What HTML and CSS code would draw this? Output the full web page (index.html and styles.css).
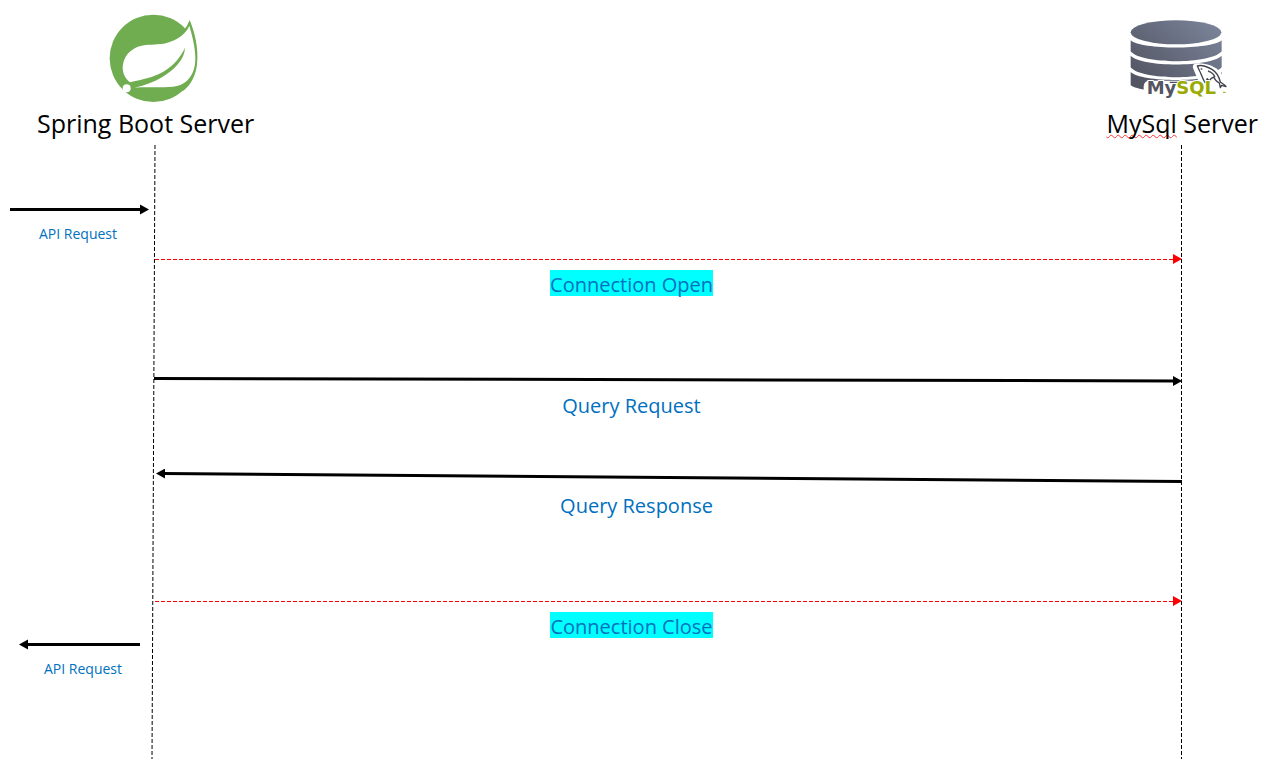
FILE: index.html
```html
<!DOCTYPE html>
<html lang="en">
<head>
<meta charset="utf-8">
<title>Spring Boot and MySql connection sequence</title>
<link rel="stylesheet" href="styles.css">
</head>
<body>
<main class="diagram">
  <svg class="defs" width="0" height="0" aria-hidden="true">
    <defs>
      <marker id="head-black" viewBox="0 0 9 10" refX="9" refY="5" markerWidth="9" markerHeight="10" markerUnits="userSpaceOnUse" orient="auto"><path d="M0 0 9 5 0 10z" fill="#000"/></marker>
      <marker id="head-red" viewBox="0 0 9 10" refX="9" refY="5" markerWidth="9" markerHeight="10" markerUnits="userSpaceOnUse" orient="auto"><path d="M0 0 9 5 0 10z" fill="#f00"/></marker>
    </defs>
  </svg>

  <header class="participants">
    <section class="participant">
      <svg class="logo" viewBox="35 21 312 276" role="img" aria-label="Spring">
        <g fill="#70ad51">
          <circle cx="189" cy="160" r="131"/>
          <path d="M280 76Q291 64 298 45C316 88 323 132 321 166C319 210 302 240 278 258L240 200z"/>
        </g>
        <path fill="#fff" d="M297 62C308 99 316 137 315 165C314 205 293 236 260 243C222 251 174 244 133 248C164 241 192 231 216 216C250 195 283 164 284 128C267 165 238 192 206 207C176 221 145 225 119 232C103 221 94 199 98 178C104 143 134 123 166 120C191 118 214 120 238 111C266 101 288 84 297 62z"/>
        <circle cx="109" cy="250" r="12" fill="#fff"/>
      </svg>
      <h1 class="name">Spring Boot Server</h1>
    </section>
    <section class="participant">
      <svg class="logo" viewBox="25 6 312 276" role="img" aria-label="MySQL">
        <defs>
          <linearGradient id="disk" gradientUnits="userSpaceOnUse" x1="270" y1="40" x2="80" y2="240">
            <stop offset="0" stop-color="#788197"/>
            <stop offset="1" stop-color="#535562"/>
          </linearGradient>
        </defs>
        <g fill="url(#disk)">
          <ellipse cx="169" cy="67" rx="136" ry="36"/>
          <path d="M33 91C65 120 273 120 306 91V124C273 164 65 164 33 124z"/>
          <path d="M33 137C65 172 273 172 306 137V172C273 212 65 212 33 172z"/>
          <path d="M33 186C65 218 273 218 306 186V226C273 252 65 252 33 226z"/>
        </g>
        <path d="M72 264V228Q74 212 90 212H236L220 174Q216 158 240 160Q291 164 308 196L325 235V264z" fill="#fff"/>
        <path d="M233 168C244 164 262 170 278 179C291 187 299 204 302 216C309 222 315 223 319 230L306 226L302 233L299 219C290 215 285 208 282 201C276 204 270 206 270 214L263 206C259 212 258 222 255 216C247 203 244 190 240 183z" fill="#fff" stroke="#3f414c" stroke-width="4" stroke-linejoin="round"/>
        <path d="M243 176l5 2M150 217h31M265 183C274 186 283 193 286 202" fill="none" stroke="#4d4f5b" stroke-width="4"/>
        <text class="logo-text" x="81" y="252"><tspan fill="#535562">My</tspan><tspan fill="#9aab00">SQL</tspan></text>
        <path d="M310 247h8" stroke="#9aab00" stroke-width="3"/>
      </svg>
      <h1 class="name"><span class="misspelt">MySql</span> Server</h1>
    </section>
  </header>

  <section class="sequence">
    <svg class="lifeline lifeline-left" viewBox="0 0 6 615" preserveAspectRatio="none" aria-hidden="true"><path d="M5 1 2 615"/></svg>
    <svg class="lifeline lifeline-right" viewBox="0 0 6 615" preserveAspectRatio="none" aria-hidden="true"><path d="M3.5 1V615"/></svg>

    <div class="external request">
      <svg class="arrow" aria-hidden="true"><line class="stroke" x1="0" y1="6.5" x2="131" y2="6.5"/><path d="M130 1.5 139 6.5 130 11.5z"/></svg>
      <p class="label small">API Request</p>
    </div>

    <div class="message open">
      <svg class="arrow" aria-hidden="true"><line class="dash" x1="0" y1="6" x2="100%" y2="6" marker-end="url(#head-red)"/></svg>
      <p class="label"><mark>Connection Open</mark></p>
    </div>

    <div class="message query">
      <svg class="arrow" aria-hidden="true"><line class="stroke" x1="-1" y1="5.5" x2="99.5%" y2="8"/><line x1="0" y1="5.5" x2="100%" y2="8" stroke="transparent" marker-end="url(#head-black)"/></svg>
      <p class="label">Query Request</p>
    </div>

    <div class="message response">
      <svg class="arrow" aria-hidden="true"><line class="stroke" x1="100%" y1="14.5" x2="8" y2="6.5"/><line x1="100%" y1="14.5" x2="1" y2="6.5" stroke="transparent" marker-end="url(#head-black)"/></svg>
      <p class="label">Query Response</p>
    </div>

    <div class="message close">
      <svg class="arrow" aria-hidden="true"><line class="dash" x1="0" y1="6" x2="100%" y2="6" marker-end="url(#head-red)"/></svg>
      <p class="label"><mark>Connection Close</mark></p>
    </div>

    <div class="external reply">
      <svg class="arrow" aria-hidden="true"><line class="stroke" x1="8" y1="6.5" x2="122" y2="6.5"/><path d="M10 1.5 1 6.5 10 11.5z"/></svg>
      <p class="label small">API Request</p>
    </div>
  </section>
</main>
</body>
</html>
```
FILE: styles.css
```css
* { box-sizing: border-box; }

body {
  margin: 0;
  background: #fff;
  color: #000;
  font-family: "Open Sans", "Noto Sans", sans-serif;
}

.diagram {
  display: flex;
  flex-direction: column;
  min-height: 100vh;
}

.defs { position: absolute; }

.participants {
  display: flex;
  justify-content: space-between;
  padding: 12px 24px 0 37px;
}

.participant {
  display: flex;
  flex-direction: column;
  align-items: center;
}

.logo {
  width: 104px;
  height: 92px;
}

.participant:first-child .logo { margin-left: 16px; }
.participant:last-child .logo { margin-right: 4px; }

.logo-text {
  font: bold 54px "DejaVu Sans", sans-serif;
  stroke: #fff;
  stroke-width: 6px;
  paint-order: stroke;
}

.name {
  margin: 3px 0 0;
  font-size: 25px;
  font-weight: 400;
  line-height: 32px;
}

.misspelt {
  text-decoration: underline wavy #f33 1px;
  text-decoration-skip-ink: none;
  text-underline-offset: 1px;
}

.sequence {
  position: relative;
  flex: 1;
  padding-top: 64px;
}

.lifeline {
  position: absolute;
  top: 5px;
  width: 6px;
  height: calc(100% - 5px);
}

.lifeline path {
  fill: none;
  stroke: #000;
  stroke-width: 1;
  stroke-dasharray: 4 2;
}

.lifeline-left { left: 150px; }
.lifeline-right { right: 98px; }

.arrow {
  display: block;
  width: 100%;
  height: 12px;
  overflow: visible;
}

.stroke {
  stroke: #000;
  stroke-width: 3;
}

.dash {
  stroke: #f00;
  stroke-width: 1;
  stroke-dasharray: 4 2;
  shape-rendering: crispEdges;
}

.label {
  margin: 0;
  color: #0070c0;
  font-size: 20px;
  line-height: 26px;
  text-align: center;
}

.small {
  font-size: 14px;
  line-height: 20px;
}

mark {
  display: block;
  width: fit-content;
  margin: 0 auto;
  padding-top: 4px;
  background: #0ff;
  color: inherit;
  line-height: 22px;
}

.external .arrow { width: 140px; }
.external .label {
  width: 136px;
  padding-top: 9px;
}

.message {
  margin: 0 100px 0 155px;
}

.message .label {
  padding: 5px 74px 0 0;
}

.request { margin-left: 10px; }
.open { margin-top: 9px; }
.query { margin-top: 77px; }
.query .label { padding-top: 8px; }
.response { margin-top: 48px; }
.response .arrow { height: 18px; }
.response .label { padding: 8px 64px 0 0; }
.close { margin-top: 76px; }
.reply { margin-left: 18px; }
.reply .label { width: 130px; }
```
